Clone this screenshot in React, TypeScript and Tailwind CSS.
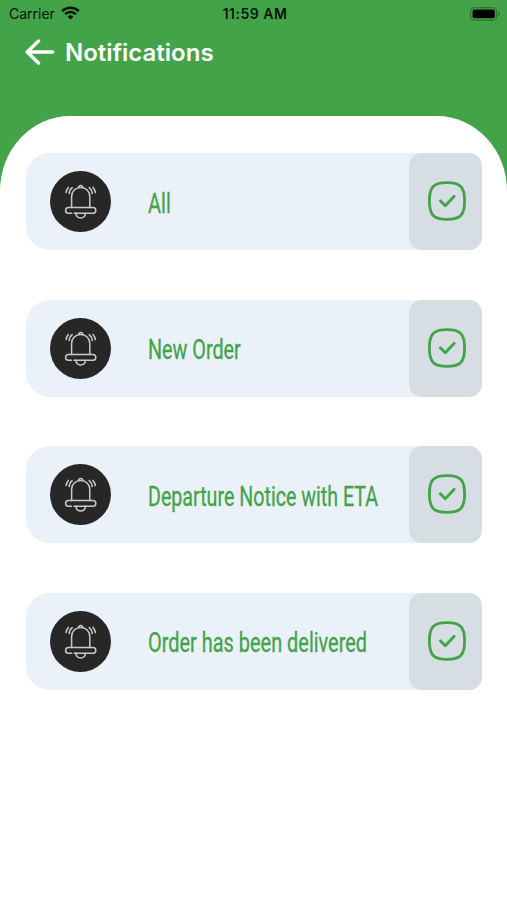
import React, { useState } from 'react';

interface NotificationOption {
  id: string;
  label: string;
  labelClass: string;
}

// Labels are condensed horizontally to get the narrow lettering
const options: NotificationOption[] = [
  { id: 'all', label: 'All', labelClass: 'scale-x-[0.74]' },
  { id: 'new-order', label: 'New Order', labelClass: 'scale-x-[0.732]' },
  { id: 'departure', label: 'Departure Notice with ETA', labelClass: 'scale-x-[0.728]' },
  { id: 'delivered', label: 'Order has been delivered', labelClass: 'scale-x-[0.738]' },
];

const WifiIcon: React.FC = () => (
  <svg className="-mt-[2px] ml-[6px] h-[14px] w-[19px]" viewBox="0 0 19 14" fill="none" stroke="#071407" strokeWidth="2.5">
    <path d="M1.2 5.1a12 12 0 0 1 16.6 0" />
    <path d="M4.1 8.2a7.8 7.8 0 0 1 10.8 0" />
    <path d="M9.5 13.6 6.6 10.6a4.1 4.1 0 0 1 5.8 0z" fill="#071407" stroke="none" />
  </svg>
);

const BatteryIcon: React.FC = () => (
  <svg className="h-[14px] w-[31px]" viewBox="0 0 31 14">
    <rect x="0.6" y="0.6" width="26" height="12.6" rx="3.8" fill="none" stroke="#2e7532" strokeWidth="1.2" />
    <rect x="2.5" y="2.5" width="22.4" height="8.8" rx="2" fill="#000" />
    <path d="M28.2 4.8c2.2.6 2.2 3.8 0 4.4z" fill="#2e7532" />
  </svg>
);

const BackArrow: React.FC = () => (
  <svg
    className="h-[28px] w-[30px]"
    viewBox="0 0 30 28"
    fill="none"
    stroke="#fff"
    strokeWidth="3.4"
    strokeLinecap="round"
    strokeLinejoin="round"
  >
    <path d="M13.5 3 2.2 14l11.3 11M2.5 14h25.2" />
  </svg>
);

const BellIcon: React.FC = () => (
  <svg
    className="h-[61px] w-[61px]"
    viewBox="0 0 61 61"
    fill="none"
    stroke="#c9c9c9"
    strokeWidth="1.5"
    strokeLinecap="round"
    strokeLinejoin="round"
  >
    <path d="M21.6 36.4V25.5c0-5.3 4-9 9.1-9s9.1 3.7 9.1 9v10.9" />
    <path d="M28.6 16.4c.2-2.6 4-2.6 4.2 0" />
    <path d="M21.6 36.6h18.2M24 36.6h-5.6a2.8 2.8 0 0 0 0 5.6h3.1M24 42.2h19a2.8 2.8 0 0 0 0-5.6h-3.2" />
    <path d="M25.9 42.3c.5 6.3 9.1 6.3 9.6 0" />
    <path d="M22.2 16.6c-2 1.6-2.9 3.5-3 6M18.4 16.4c-1.4 1.5-2.2 3.2-2.3 5.2" />
    <path d="M39.2 16.6c2 1.6 2.9 3.5 3 6M43 16.4c1.4 1.5 2.2 3.2 2.3 5.2" />
  </svg>
);

const CheckIcon: React.FC<{ checked: boolean }> = ({ checked }) => (
  <svg
    className="mb-px ml-[2px] h-[40px] w-[38px]"
    viewBox="0 0 38 40"
    fill="none"
    stroke="#43a348"
    strokeWidth="2.8"
    strokeLinecap="round"
    strokeLinejoin="round"
  >
    <path d="M19 1.6c13.4 0 17.6 4.2 17.6 18.4S32.4 38.4 19 38.4 1.4 34.2 1.4 20 5.6 1.6 19 1.6z" />
    {checked && <path d="m12.3 19.7 5 5 8.9-9.4" />}
  </svg>
);

const App: React.FC = () => {
  const [enabled, setEnabled] = useState<string[]>(options.map(option => option.id));

  const toggle = (id: string) => {
    setEnabled(prev => (prev.includes(id) ? prev.filter(item => item !== id) : [...prev, id]));
  };

  return (
    <div className="h-[900px] overflow-hidden bg-white bg-linear-to-b from-[#43a348] from-[190px] to-white to-[190px]">
      {/* Status bar */}
      <div className="grid h-[27px] grid-cols-3 items-center pr-[6px] pl-[9px] font-['Inter'] text-[14px] text-[#071407]">
        <div className="flex items-center">
          <span>Carrier</span>
          <WifiIcon />
        </div>
        <span className="text-center font-semibold tracking-[0.5px]">11:59 AM</span>
        <div className="flex justify-end">
          <BatteryIcon />
        </div>
      </div>

      {/* Header */}
      <header className="flex h-[89px] items-start pt-[11px] pl-[25px]">
        <button type="button" aria-label="Back">
          <BackArrow />
        </button>
        <h1 className="mt-px ml-[10px] font-['Inter'] text-[24px] leading-[28px] font-semibold text-white">
          Notifications
        </h1>
      </header>

      {/* Options */}
      <main className="h-[784px] rounded-t-[70px_75px] bg-white pt-[37px] pr-[25px] pl-[26px]">
        <div className="flex flex-col gap-[49.6px]">
          {options.map(option => (
            <div key={option.id} className="flex h-[97px] items-center rounded-l-[24px] rounded-r-[13px] bg-[#eaf1f9] pl-[24px]">
              <div className="h-[61px] w-[61px] shrink-0 rounded-full bg-[#272727]">
                <BellIcon />
              </div>
              <div className="ml-[37px] min-w-0 flex-1 pt-[4px]">
                <span
                  className={`inline-block origin-left font-['Roboto'] text-[27px] leading-[36px] whitespace-nowrap text-[#43a348] [-webkit-text-stroke:0.3px_#43a348] ${option.labelClass}`}
                >
                  {option.label}
                </span>
              </div>
              <button
                type="button"
                aria-label={option.label}
                onClick={() => toggle(option.id)}
                className="flex h-full w-[73px] shrink-0 items-center justify-center rounded-[13px] bg-[#d6dee3]"
              >
                <CheckIcon checked={enabled.includes(option.id)} />
              </button>
            </div>
          ))}
        </div>
      </main>
    </div>
  );
};

export default App;
